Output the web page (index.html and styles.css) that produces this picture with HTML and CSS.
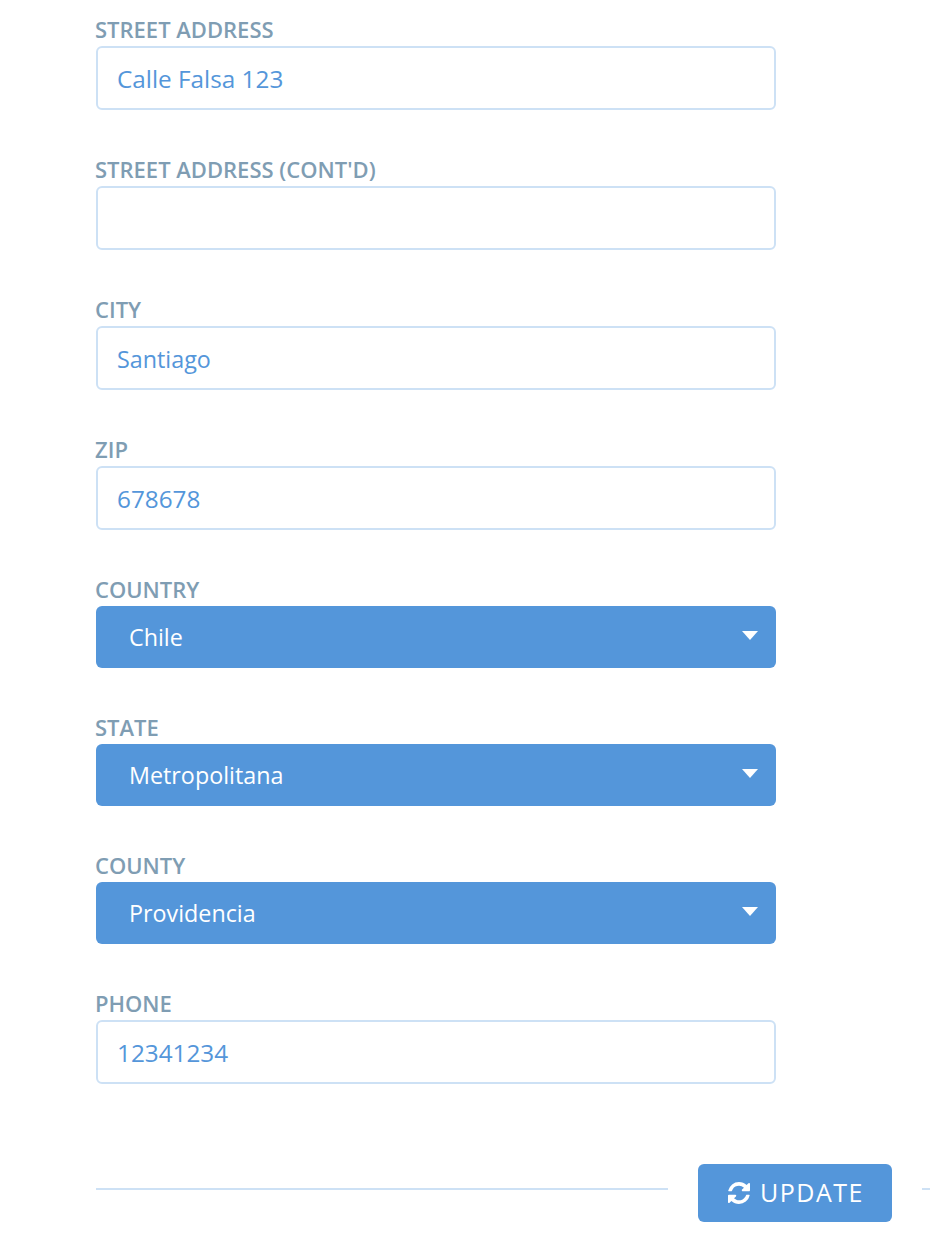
FILE: index.html
```html
<!DOCTYPE html>
<html lang="en">
<head>
  <meta charset="UTF-8">
  <meta name="viewport" content="width=device-width, initial-scale=1.0">
  <title>Address</title>
  <link rel="stylesheet" href="styles.css">
</head>
<body>
  <form class="address-form">
    <div class="field">
      <label for="street">Street Address</label>
      <input type="text" id="street" value="Calle Falsa 123">
    </div>
    <div class="field">
      <label for="street2">Street Address (cont'd)</label>
      <input type="text" id="street2">
    </div>
    <div class="field">
      <label for="city">City</label>
      <input type="text" id="city" class="text-narrow" value="Santiago">
    </div>
    <div class="field">
      <label for="zip">Zip</label>
      <input type="text" id="zip" value="678678">
    </div>
    <div class="field">
      <label for="country">Country</label>
      <div class="select-wrap">
        <select id="country"><option>Chile</option></select>
      </div>
    </div>
    <div class="field">
      <label for="state">State</label>
      <div class="select-wrap">
        <select id="state"><option>Metropolitana</option></select>
      </div>
    </div>
    <div class="field">
      <label for="county">County</label>
      <div class="select-wrap">
        <select id="county"><option>Providencia</option></select>
      </div>
    </div>
    <div class="field">
      <label for="phone">Phone</label>
      <input type="text" id="phone" value="12341234">
    </div>

    <div class="form-footer">
      <span class="rule"></span>
      <button type="button" class="update-btn">
        <svg class="icon" viewBox="128 128 1536 1536" aria-hidden="true"><path fill="currentColor" d="M1639 1056q0 5-1 7-64 268-268 434.5t-478 166.5q-146 0-282.5-55t-243.5-157l-129 129q-19 19-45 19t-45-19-19-45v-448q0-26 19-45t45-19h448q26 0 45 19t19 45-19 45l-137 137q71 66 161 102t187 36q134 0 250-65t186-179q11-17 53-117 8-23 30-23h192q13 0 22.5 9.5t9.5 22.5zm25-800v448q0 26-19 45t-45 19h-448q-26 0-45-19t-19-45 19-45l138-138q-148-137-349-137-134 0-250 65t-186 179q-11 17-53 117-8 23-30 23h-199q-13 0-22.5-9.5t-9.5-22.5v-7q65-268 270-434.5t480-166.5q146 0 284 55.5t245 156.5l130-129q19-19 45-19t45 19 19 45z"/></svg>
        <span class="btn-label">Update</span>
      </button>
      <span class="rule rule-end"></span>
    </div>
  </form>
</body>
</html>
```

FILE: styles.css
```css
* {
  box-sizing: border-box;
}
body {
  margin: 0;
  background: #fff;
  font-family: "Open Sans", sans-serif;
  overflow: hidden;
}
.address-form {
  padding: 18px 0 0 96px;
}
.field {
  width: 680px;
  margin-bottom: 48px;
}
label {
  display: block;
  height: 28px;
  margin-left: -1px;
  line-height: 22px;
  font-size: 22px;
  font-weight: 600;
  color: #7f9db3;
  text-transform: uppercase;
}
input {
  display: block;
  width: 100%;
  height: 64px;
  padding: 0 19px;
  border: 2px solid #cde1f5;
  border-radius: 6px;
  background: #fff;
  color: #5496da;
  font-family: inherit;
  font-size: 24.3px;
  outline: none;
}
.text-narrow {
  padding-top: 2px;
  font-size: 23.3px;
}
.select-wrap {
  position: relative;
}
.select-wrap::after {
  content: "";
  position: absolute;
  top: 25px;
  right: 18px;
  border-left: 8px solid transparent;
  border-right: 8px solid transparent;
  border-top: 9px solid #fff;
  pointer-events: none;
}
select {
  display: block;
  width: 100%;
  height: 62px;
  padding: 0 33px;
  border: none;
  border-radius: 6px;
  background: #5496da;
  color: #fff;
  font-family: inherit;
  font-size: 23.3px;
  appearance: none;
  outline: none;
}
.form-footer {
  display: flex;
  align-items: flex-start;
  margin-top: 80px;
}
.rule {
  width: 572px;
  height: 2px;
  margin-top: 24px;
  background: #cde1f5;
}
.rule-end {
  width: auto;
  flex: 1;
}
.update-btn {
  display: flex;
  align-items: center;
  justify-content: center;
  gap: 10px;
  width: 194px;
  height: 58px;
  margin: 0 30px;
  padding: 0 0 0 2px;
  border: none;
  border-radius: 6px;
  background: #5496da;
  color: #fff;
  font-family: inherit;
  font-size: 25px;
  letter-spacing: 1.5px;
  text-transform: uppercase;
}
.btn-label {
  margin-top: -2px;
}
.icon {
  width: 22px;
  height: 22px;
}
```
